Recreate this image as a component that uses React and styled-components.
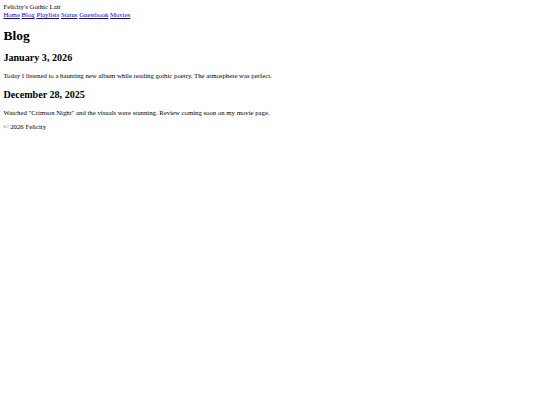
import React from "react";
import styled, { createGlobalStyle } from "styled-components";

// reference is a default-styled page shot at 1280px and shown at 540px (scale 0.421875)
const GlobalStyle = createGlobalStyle`
  html, body {
    background: #fff;
  }
  body {
    margin: 3.375px;
    font-family: "Liberation Serif", "Times New Roman", serif;
    font-size: 6.75px;
    line-height: 1.15;
    color: #000;
  }
`;

const SiteTitle = styled.div``;

const Nav = styled.nav``;

const NavLink = styled.a`
  color: #0000ee;
  text-decoration: underline;
`;

const PageTitle = styled.h1`
  font-size: 13.5px;
  margin: 9.045px 0;
`;

const PostDate = styled.h2`
  font-size: 10.125px;
  margin: 8.404px 0;
`;

const Text = styled.p`
  margin: 6.75px 0;
`;

const links = ["Home", "Blog", "Playlists", "Status", "Guestbook", "Movies"];

const posts = [
  {
    date: "January 3, 2026",
    body: "Today I listened to a haunting new album while reading gothic poetry. The atmosphere was perfect.",
  },
  {
    date: "December 28, 2025",
    body: 'Watched "Crimson Night" and the visuals were stunning. Review coming soon on my movie page.',
  },
];

const App = () => (
  <>
    <GlobalStyle />
    <header>
      <SiteTitle>Felicity's Gothic Lair</SiteTitle>
      <Nav>
        {links.map((l, i) => (
          <React.Fragment key={l}>
            {i > 0 && " "}
            <NavLink href="#">{l}</NavLink>
          </React.Fragment>
        ))}
      </Nav>
    </header>
    <main>
      <PageTitle>Blog</PageTitle>
      {posts.map((p) => (
        <article key={p.date}>
          <PostDate>{p.date}</PostDate>
          <Text>{p.body}</Text>
        </article>
      ))}
    </main>
    <footer>
      <Text>© 2026 Felicity</Text>
    </footer>
  </>
);

export default App;
